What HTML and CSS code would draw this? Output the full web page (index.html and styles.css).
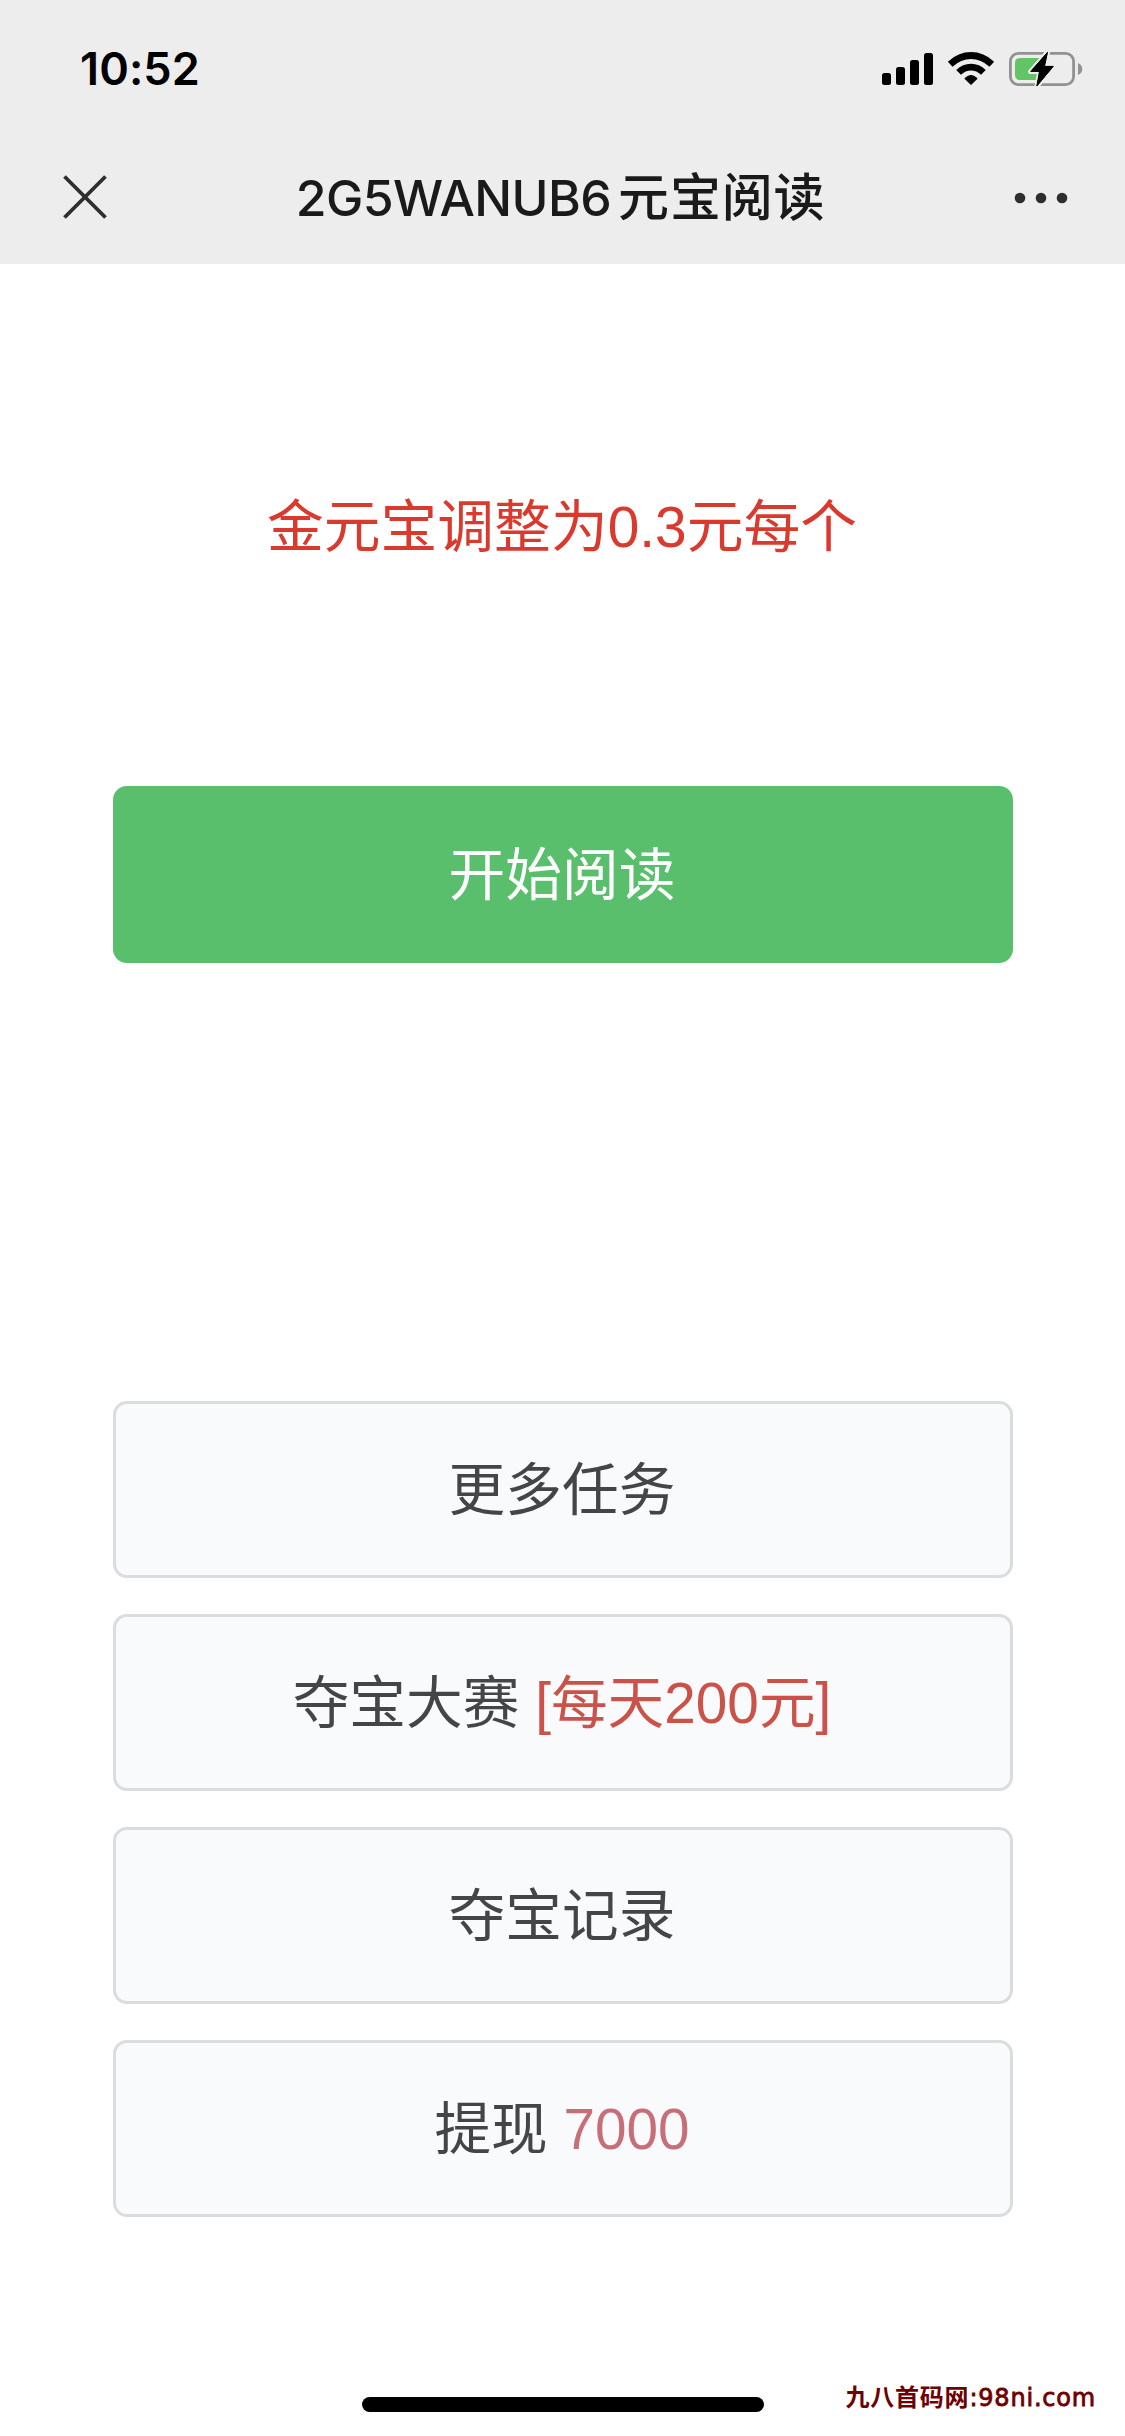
FILE: index.html
```html
<!DOCTYPE html>
<html lang="zh-CN">
<head>
<meta charset="utf-8">
<title>元宝阅读</title>
<link rel="stylesheet" href="styles.css">
</head>
<body>
<header class="top">
  <div class="status">
    <time class="clock">10:52</time>
    <svg class="status-icons" width="202" height="40" viewBox="881 49 202 40">
      <g fill="#000">
        <rect x="882" y="73" width="9" height="12" rx="2.5"/>
        <rect x="896" y="67" width="9" height="18" rx="2.5"/>
        <rect x="910" y="60" width="9" height="25" rx="2.5"/>
        <rect x="924" y="53" width="9" height="32" rx="2.5"/>
        <path d="M971 84.500 L964.800 78.500 Q971 72.500 977.200 78.500 Z" stroke="#000" stroke-width="1" stroke-linejoin="round"/>
      </g>
      <g fill="none" stroke="#000" stroke-width="6.800">
        <path d="M950.200 64.200 Q959.500 55.500 971 55.500 T991.800 64.200"/>
        <path d="M958.600 72.400 Q964 67.200 971 67.200 T983.400 72.400"/>
      </g>
      <rect x="1010.400" y="53.400" width="63.200" height="31.200" rx="8" fill="none" stroke="#929292" stroke-width="2.800"/>
      <path d="M1078 63 Q1082.300 65 1082.300 69 T1078 75 Z" fill="#929292"/>
      <path d="M1020 58 H1045 L1037 80 H1020 Q1015 80 1015 75 V63 Q1015 58 1020 58 Z" fill="#63c466"/>
      <path d="M1048 51.500 L1030.300 71.700 H1039.500 L1036.800 86.500 L1053.700 66 H1044.500 Z" fill="#000" stroke="#ededed" stroke-width="4.600" stroke-linejoin="round" paint-order="stroke"/>
      <path d="M1047.400 52.500 L1030.800 71.300 H1039.500 L1036.800 86 L1053.200 66.400 H1044.500 Z" fill="#000" stroke="#000" stroke-width="1" stroke-linejoin="round"/>
    </svg>
  </div>
  <nav class="nav">
    <svg class="close" width="44" height="46" viewBox="0 0 44 46" fill="none" stroke="#2e2e2e" stroke-width="3.800"><path d="M1.500 1.500 L42.500 42.500 M42.500 1.500 L1.500 42.500"/></svg>
    <h1 class="title"><span class="title-code">2G5WANUB6</span><span class="title-name">元宝阅读</span></h1>
    <svg class="more" width="54" height="12" viewBox="0 0 54 12" fill="#2e2e2e"><circle cx="6" cy="6" r="5.300"/><circle cx="27" cy="6" r="5.300"/><circle cx="48" cy="6" r="5.300"/></svg>
  </nav>
</header>
<main class="content">
  <p class="notice">金元宝调整为0.3元每个</p>
  <button class="btn btn-primary">开始阅读</button>
  <div class="menu">
    <button class="btn">更多任务</button>
    <button class="btn">夺宝大赛 <span class="prize">[每天200元]</span></button>
    <button class="btn">夺宝记录</button>
    <button class="btn">提现 <span class="amount">7000</span></button>
  </div>
</main>
<footer class="bottom">
  <div class="home-bar"></div>
  <div class="site"><span class="site-name">九八首码网</span><span class="site-url">:98ni.com</span></div>
</footer>
</body>
</html>
```
FILE: styles.css
```css
* { box-sizing: border-box; }
body {
  margin: 0;
  height: 2436px;
  display: flex;
  flex-direction: column;
  background: #fff;
  font-family: "Liberation Sans", "Noto Sans CJK SC", sans-serif;
}
.top { height: 264px; background: #ededed; }
.status {
  height: 132px;
  padding: 49px 42px 0 80px;
  display: flex;
  justify-content: space-between;
  align-items: flex-start;
}
.clock {
  font: 600 45px/40px Inter, sans-serif;
  letter-spacing: 0.1px;
  color: #000;
}
.nav {
  height: 132px;
  padding: 0 57px 0 63px;
  display: flex;
  justify-content: space-between;
  align-items: center;
}
.title {
  margin: 0;
  display: flex;
  align-items: baseline;
  font: 500 50px/72px Inter, "Noto Sans CJK SC", sans-serif;
  color: #1a1a1a;
}
.title-code { letter-spacing: -0.6px; }
.title-name { margin-left: 7px; font-size: 51px; letter-spacing: 0.8px; }
.content {
  flex: 1;
  padding: 224px 113px 0 113px;
  display: flex;
  flex-direction: column;
}
.notice {
  margin: 0;
  padding-right: 1px;
  font-size: 56.8px;
  line-height: 80px;
  text-align: center;
  color: #da3a2e;
}
.btn {
  width: 900px;
  height: 177px;
  padding: 2px 2px 0 0;
  border: 3px solid #dbdcde;
  border-radius: 14px;
  background: #f9fafc;
  font-family: inherit;
  font-size: 56.7px;
  line-height: 80px;
  color: #444547;
}
.btn-primary {
  margin-top: 218px;
  border: 0;
  background: #5abf6d;
  color: #fff;
}
.menu {
  margin-top: 438px;
  display: flex;
  flex-direction: column;
  gap: 36px;
}
.prize { color: #cb5248; }
.amount { color: #c66f78; }
.bottom {
  height: 60px;
  padding: 0 29px 0 362px;
  display: flex;
  justify-content: space-between;
  align-items: flex-start;
}
.home-bar {
  margin-top: 21px;
  width: 402px;
  height: 15px;
  border-radius: 8px;
  background: #000;
}
.site {
  display: flex;
  align-items: baseline;
  margin-top: 2px;
  line-height: 36px;
  color: #6e0000;
  white-space: nowrap;
}
.site-name { font: 700 24px/36px "Noto Sans CJK SC", sans-serif; letter-spacing: 0.8px; }
.site-url {
  font: 400 24px/36px "DejaVu Sans", sans-serif;
  letter-spacing: 0.8px;
  -webkit-text-stroke: 0.8px #6e0000;
}
```
